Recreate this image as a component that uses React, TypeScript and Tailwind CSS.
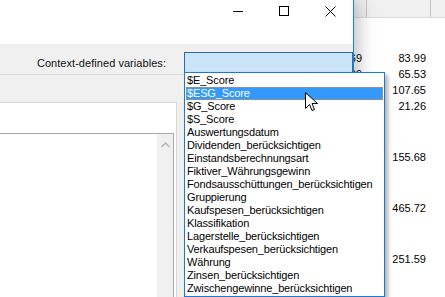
import React from "react";

const items = [
  "$E_Score",
  "$ESG_Score",
  "$G_Score",
  "$S_Score",
  "Auswertungsdatum",
  "Dividenden_berücksichtigen",
  "Einstandsberechnungsart",
  "Fiktiver_Währungsgewinn",
  "Fondsausschüttungen_berücksichtigen",
  "Gruppierung",
  "Kaufspesen_berücksichtigen",
  "Klassifikation",
  "Lagerstelle_berücksichtigen",
  "Verkaufspesen_berücksichtigen",
  "Währung",
  "Zinsen_berücksichtigen",
  "Zwischengewinne_berücksichtigen",
];

function Row({ a, b, className }: { a: string; b: string; className: string }) {
  return (
    <div className={`flex h-[16px] items-center ${className}`}>
      <div className="w-[362px] text-right">{a}</div>
      <div className="w-[64px] text-right">{b}</div>
    </div>
  );
}

function Sheet() {
  return (
    <div className="flex flex-col">
      <div className="flex h-[18px] bg-[#f0f0f0] border-b border-[#dadada]">
        <div className="w-[367px] border-r border-[#c4c4c4]" />
        <div className="w-[64px] border-r border-[#c4c4c4]" />
        <div className="flex-1" />
      </div>
      <Row a="12.69" b="83.99" className="mt-[32px]" />
      <Row a="40.09" b="65.53" className="" />
      <Row a="" b="107.65" className="" />
      <Row a="" b="21.26" className="" />
      <Row a="" b="155.68" className="mt-[35px]" />
      <Row a="" b="465.72" className="mt-[35px]" />
      <Row a="" b="251.59" className="mt-[35px]" />
    </div>
  );
}

function TitleButtons() {
  return (
    <div className="flex h-[22px] justify-end">
      <div className="flex w-[46px] items-center justify-center">
        <div className="h-px w-[10px] bg-black" />
      </div>
      <div className="flex w-[46px] items-center justify-center">
        <div className="h-[10px] w-[10px] border border-black" />
      </div>
      <div className="flex w-[46px] items-center justify-center">
        <svg width="11" height="11" viewBox="0 0 11 11">
          <path d="M0.5 0.5 L10.5 10.5 M10.5 0.5 L0.5 10.5" stroke="#000" strokeWidth="1" fill="none" />
        </svg>
      </div>
    </div>
  );
}

function Dialog() {
  return (
    <div className="absolute left-0 top-0 flex h-[297px] w-[354px] flex-col border-r border-[#1883d7] bg-white shadow-[3px_0_18px_rgba(0,0,0,0.28)]">
      <TitleButtons />
      <div className="h-[22px]" />
      <div className="flex h-[31px] items-start bg-[#f0f0f0] border-b border-[#dcdcdc]">
        <div className="mt-[11px] w-[166px] text-right text-[#111] tracking-[0.05px]">Context-defined variables:</div>
        <div className="ml-[18px] mt-[8px] h-[21px] w-[169px] border border-[#2a6bb2] bg-[#cce4f7]" />
      </div>
      <div className="flex flex-1 flex-col bg-[#f0f0f0] pt-[27px]">
        <div className="flex flex-1 flex-col w-[177px] border-t border-r border-[#d9d9d9] bg-white pt-[30px]">
          <div className="flex flex-1 w-[174px] border-t border-r border-[#a9a9a9]">
            <div className="flex-1" />
            <div className="flex w-[16px] flex-col items-center bg-[#f0f0f0] pt-[8px]">
              <svg width="9" height="6" viewBox="0 0 9 6">
                <path d="M0.5 5 L4.5 1 L8.5 5" stroke="#b4b4b4" strokeWidth="1.4" fill="none" />
              </svg>
            </div>
          </div>
        </div>
      </div>
    </div>
  );
}

function Dropdown() {
  return (
    <div className="absolute left-[184px] top-[72px] h-[225px] w-[201px] border border-[#1a7ad6] bg-white p-px tracking-[-0.15px] shadow-[3px_3px_4px_rgba(0,0,0,0.3)]">
      {items.map((t, i) =>
        i === 1 ? (
          <div
            key={t}
            className="h-[13px] border border-dotted border-[#d58a3c] bg-[#3399ff] pl-0 leading-[11px] text-white whitespace-nowrap"
          >
            {t}
          </div>
        ) : (
          <div key={t} className="h-[13px] pl-px leading-[13px] text-black whitespace-nowrap">
            {t}
          </div>
        )
      )}
    </div>
  );
}

function Cursor() {
  return (
    <svg className="absolute left-[305px] top-[92px]" width="13" height="20" viewBox="0 0 13 20">
      <path
        d="M0.5 0.5 L0.5 16.5 L4.5 12.5 L7 18.5 L9.5 17.5 L7 11.5 L12.5 11.5 Z"
        fill="#fff"
        stroke="#000"
        strokeWidth="1"
        strokeLinejoin="miter"
      />
    </svg>
  );
}

export default function App() {
  return (
    <div className="relative h-[297px] w-[445px] overflow-hidden bg-white font-['Liberation_Sans',Arial,sans-serif] text-[11px] text-black">
      <Sheet />
      <Dialog />
      <Dropdown />
      <Cursor />
    </div>
  );
}
